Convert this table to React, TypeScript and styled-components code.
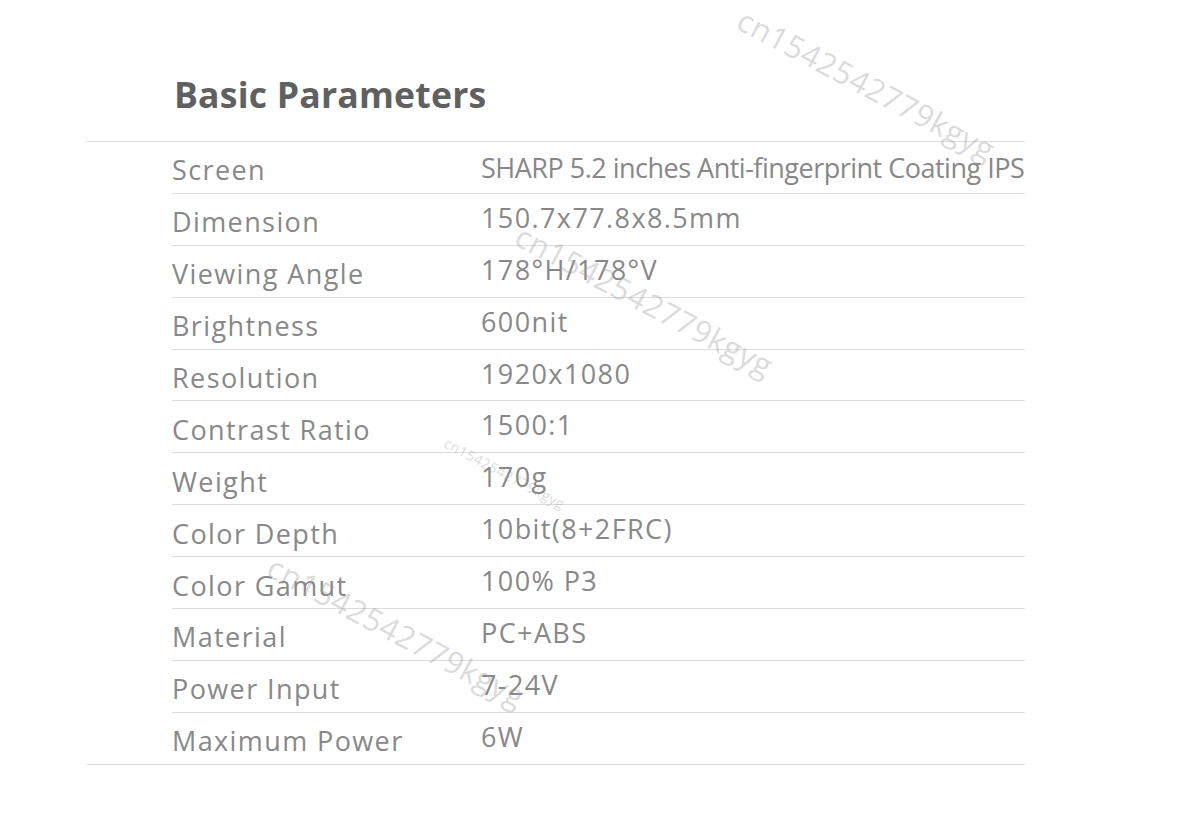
import React from 'react';
import styled, { createGlobalStyle } from 'styled-components';

const GlobalStyle = createGlobalStyle`
  html, body {
    margin: 0;
    padding: 0;
    background: #ffffff;
  }
  body {
    font-family: 'Open Sans', 'Noto Sans', sans-serif;
  }
`;

type Spec = {
  label: string;
  value: string;
  narrow?: boolean;
};

const specs: Spec[] = [
  { label: 'Screen', value: 'SHARP 5.2 inches Anti-fingerprint Coating IPS', narrow: true },
  { label: 'Dimension', value: '150.7x77.8x8.5mm' },
  { label: 'Viewing Angle', value: '178°H/178°V' },
  { label: 'Brightness', value: '600nit' },
  { label: 'Resolution', value: '1920x1080' },
  { label: 'Contrast Ratio', value: '1500:1' },
  { label: 'Weight', value: '170g' },
  { label: 'Color Depth', value: '10bit(8+2FRC)' },
  { label: 'Color Gamut', value: '100% P3' },
  { label: 'Material', value: 'PC+ABS' },
  { label: 'Power Input', value: '7-24V' },
  { label: 'Maximum Power', value: '6W' },
];

// watermark stamps scattered over the picture
const marks = [
  { x: 740, y: 2, size: 31 },
  { x: 518, y: 218, size: 31 },
  { x: 445, y: 435, size: 14 },
  { x: 270, y: 549, size: 31 },
];

const Page = styled.div`
  position: relative;
  width: 1200px;
  height: 815px;
  overflow: hidden;
  padding-top: 72px;
  box-sizing: border-box;
`;

const Section = styled.section`
  margin-left: 86px;
  width: 939px;
`;

const Title = styled.h2`
  margin: 0 0 25px 88px;
  font-size: 35.6px;
  font-weight: 700;
  color: #606060;
  line-height: 44px;
  letter-spacing: 0.2px;
`;

const Table = styled.div`
  border-top: 1px solid #dcdcdc;
  border-bottom: 1px solid #dcdcdc;
`;

const Row = styled.div`
  margin-left: 86px;
  height: 50.9px;
  display: grid;
  grid-template-columns: 309px 1fr;
  align-items: center;
  border-bottom: 1px solid #dcdcdc;

  &:last-child {
    border-bottom: none;
  }
`;

const Label = styled.div`
  font-size: 27px;
  color: #888888;
  letter-spacing: 1.4px;
  padding-top: 5px;
`;

const Value = styled.div<{ $narrow?: boolean }>`
  font-size: 27px;
  color: #888888;
  letter-spacing: ${(p) => (p.$narrow ? '-0.5px' : '1.4px')};
  white-space: nowrap;
  padding-bottom: ${(p) => (p.$narrow ? '0' : '4px')};
`;

const Watermark = styled.div<{ $size: number }>`
  position: absolute;
  font-size: ${(p) => p.$size}px;
  line-height: 1;
  color: rgba(160, 160, 160, 0.38);
  transform: rotate(28deg);
  transform-origin: left center;
  white-space: nowrap;
  pointer-events: none;
  letter-spacing: 0.6px;
`;

export default function App() {
  return (
    <Page>
      <GlobalStyle />
      <Section>
        <Title>Basic Parameters</Title>
        <Table>
          {specs.map((s) => (
            <Row key={s.label}>
              <Label>{s.label}</Label>
              <Value $narrow={s.narrow}>{s.value}</Value>
            </Row>
          ))}
        </Table>
      </Section>
      {marks.map((m, i) => (
        <Watermark key={i} $size={m.size} style={{ left: m.x, top: m.y }}>
          cn1542542779kgyg
        </Watermark>
      ))}
    </Page>
  );
}
